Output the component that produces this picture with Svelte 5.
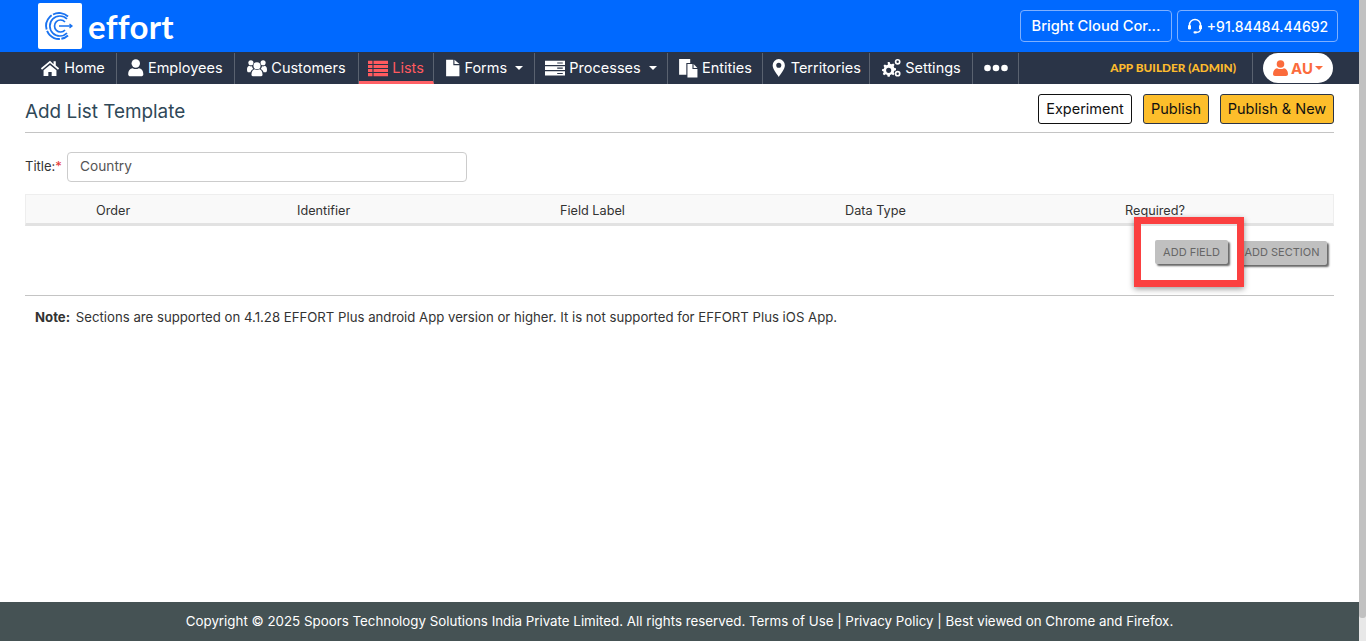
<script>
  const navItems = [
    { label: 'Home', icon: 'home', width: 88 },
    { label: 'Employees', icon: 'user', width: 118 },
    { label: 'Customers', icon: 'users', width: 124 },
    { label: 'Lists', icon: 'list', width: 75, active: true },
    { label: 'Forms', icon: 'file', width: 101, caret: true },
    { label: 'Processes', icon: 'server', width: 133, caret: true },
    { label: 'Entities', icon: 'copy', width: 95 },
    { label: 'Territories', icon: 'pin', width: 107 },
    { label: 'Settings', icon: 'cogs', width: 103 },
    { label: '', icon: 'dots', width: 46 }
  ];
  const columns = [
    { label: 'Order', width: 201 },
    { label: 'Identifier', width: 263 },
    { label: 'Field Label', width: 285 },
    { label: 'Data Type', width: 280 },
    { label: 'Required?', width: 209 }
  ];
  // the narrow glyphs get a cropped box so the label sits closer
  const narrow = ['user', 'file', 'pin'];
</script>

<div class="page">
  <div class="main">
    <header class="topbar">
      <div class="logo">
        <div class="logo-box">
          <svg width="44" height="46" viewBox="0 0 44 46" fill="none" stroke="#1a73f0">
            <path d="M30 13.500a13 13 0 1 0 0 19" stroke-width="1.900" stroke-dasharray="16 1.500" />
            <path d="M29 16a10 10 0 1 0 0 14" stroke-width="1.700" />
            <path d="M27 19a6 6 0 1 0 0 8" stroke-width="1.700" />
            <path d="M21 23h13M31.500 21l2.500 2-2.500 2" stroke-width="1.300" />
          </svg>
        </div>
        <span class="logo-text">effort</span>
      </div>
      <div class="top-actions">
        <div class="top-btn company">Bright Cloud Cor...</div>
        <div class="top-btn phone">
          <svg width="16" height="16" viewBox="0 0 16 16" fill="none" stroke="#fff" stroke-width="1.400">
            <path d="M2.500 9V7a5.500 5.500 0 0 1 11 0v2" />
            <rect x="1" y="7" width="3" height="4.500" rx="1.200" fill="#fff" stroke="none" />
            <rect x="12" y="7" width="3" height="4.500" rx="1.200" fill="#fff" stroke="none" />
            <path d="M13.500 11c0 2.200-1.500 3.300-4 3.300" stroke-width="1.200" />
            <rect x="6.500" y="13.200" width="3.500" height="2.200" rx="1" fill="#fff" stroke="none" />
          </svg>
          +91.84484.44692
        </div>
      </div>
    </header>

    <nav class="navbar">
      <div class="nav-items">
        {#each navItems as item}
          <div class="nav-item" class:active={item.active} style="width: {item.width}px">
            {#if item.icon === 'dots'}
              <svg class="nav-icon" width="24" height="18" viewBox="0 0 24 18" fill="currentColor">
                <circle cx="3.500" cy="9" r="3.300" />
                <circle cx="12" cy="9" r="3.300" />
                <circle cx="20.500" cy="9" r="3.300" />
              </svg>
            {:else}
              <svg
                class="nav-icon"
                width={narrow.includes(item.icon) ? 15.560 : 20}
                height="20"
                viewBox={narrow.includes(item.icon) ? '2 0 14 18' : '0 0 18 18'}
                fill="currentColor"
              >
                {#if item.icon === 'home'}
                  <path d="M9 2.500.8 9.300l1 1.200L9 4.600l7.200 5.900 1-1.200-3-2.500V3h-2v2.600z" />
                  <path d="M3.200 11 9 6.200l5.800 4.800v5.200h-4.300v-3.700h-3v3.700H3.200z" />
                {:else if item.icon === 'user'}
                  <circle cx="9" cy="5" r="3.800" />
                  <path d="M2.200 14.800c0-3.600 1.800-5.400 4-5.600 1.700 1 3.900 1 5.600 0 2.200.2 4 2 4 5.600 0 1-.9 1.700-2 1.700H4.200c-1.100 0-2-.7-2-1.700z" />
                {:else if item.icon === 'users'}
                  <circle cx="9" cy="7" r="3.200" />
                  <circle cx="3.500" cy="4.300" r="2.300" />
                  <circle cx="14.500" cy="4.300" r="2.300" />
                  <path d="M4 15c0-3 1.500-4.500 3-4.800 1.200.7 2.800.7 4 0 1.500.3 3 1.800 3 4.800 0 1-1 1.500-2 1.500H6c-1 0-2-.5-2-1.500z" />
                  <path d="M0 10.500c0-2 .8-3.300 2-3.500.8.500 1.600.7 2.500.4.100 1 .6 1.800 1.200 2.400-1.200.6-2.200 1.500-2.600 3H1.500C.5 12.800 0 12 0 10.500zM18 10.500c0-2-.8-3.300-2-3.500-.8.500-1.600.7-2.500.4-.1 1-.6 1.800-1.200 2.400 1.200.6 2.200 1.500 2.600 3h1.600c1 0 1.500-.8 1.500-2.300z" />
                {:else if item.icon === 'list'}
                  <path d="M0 2.500h4v2.800H0zM5 2.500h13v2.800H5zM0 6.200h4V9H0zM5 6.200h13V9H5zM0 9.900h4v2.800H0zM5 9.900h13v2.800H5zM0 13.600h4v2.800H0zM5 13.600h13v2.800H5z" />
                {:else if item.icon === 'file'}
                  <path d="M3 1.500h6.500v5h5.500v10H3z" />
                  <path d="M10.500 1.500l4.500 4h-4.500z" />
                {:else if item.icon === 'server'}
                  <path d="M0 2.500h18v3.800H0zM0 7.500h18v3.200H0zM0 12h18v3.800H0z" />
                  <path d="M11 4h5v1h-5zM11 8.600h5v1h-5zM11 13.500h5v1h-5z" fill="#2a3447" />
                {:else if item.icon === 'copy'}
                  <path d="M1 1h10v3.500H7.500V15H1z" />
                  <path d="M8.500 5.500h4.500v4.500h4.500V17.500h-9z" />
                  <path d="M14 5.500l3.500 3.500H14z" />
                {:else if item.icon === 'pin'}
                  <path fill-rule="evenodd" d="M9 1a5.500 5.500 0 0 0-5.500 5.500C3.500 10 7 14 9 17c2-3 5.500-7 5.500-10.500A5.500 5.500 0 0 0 9 1zm0 3.200a2.300 2.300 0 1 1 0 4.600 2.300 2.300 0 0 1 0-4.600z" />
                {:else}
                  <path fill-rule="evenodd" d="M6 3.500h1.800l.4 1.600 1.400.6 1.400-.8 1.200 1.200-.8 1.400.6 1.400 1.500.4v1.800l-1.500.4-.6 1.400.8 1.400-1.200 1.200-1.400-.8-1.400.6-.4 1.500H6l-.4-1.500-1.400-.6-1.400.8-1.200-1.200.8-1.400-.6-1.400L.9 12V10.200l1.500-.4.6-1.400-.8-1.400 1.200-1.200 1.400.8 1.400-.6zM6.900 8.800a2.300 2.300 0 1 0 0 4.600 2.300 2.300 0 0 0 0-4.600z" />
                  <path fill-rule="evenodd" d="M15 .8a2.600 2.600 0 1 1 0 5.200 2.600 2.600 0 0 1 0-5.200zm0 1.500a1.100 1.100 0 1 0 0 2.200 1.100 1.100 0 0 0 0-2.200z" />
                  <path fill-rule="evenodd" d="M15 11.500a2.600 2.600 0 1 1 0 5.200 2.600 2.600 0 0 1 0-5.200zm0 1.500a1.100 1.100 0 1 0 0 2.200 1.100 1.100 0 0 0 0-2.200z" />
                {/if}
              </svg>
            {/if}
            {#if item.label}<span>{item.label}</span>{/if}
            {#if item.caret}<i class="caret"></i>{/if}
          </div>
        {/each}
      </div>
      <div class="nav-right">
        <span class="role">APP BUILDER (ADMIN)</span>
        <div class="user-pill">
          <svg width="15" height="16" viewBox="0 0 15 16" fill="#fb6b3c">
            <circle cx="7.500" cy="4" r="3.800" />
            <path d="M0 14c0-3.500 2-5.500 4-5.800 2 1.200 5 1.200 7 0 2 .3 4 2.300 4 5.800 0 1-.8 2-2 2H2c-1.200 0-2-1-2-2z" />
          </svg>
          <span>AU</span>
          <i class="caret small"></i>
        </div>
      </div>
    </nav>

    <main class="content">
      <div class="page-head">
        <h1>Add List Template</h1>
        <div class="head-actions">
          <button class="btn outline">Experiment</button>
          <button class="btn yellow">Publish</button>
          <button class="btn yellow">Publish &amp; New</button>
        </div>
      </div>

      <div class="title-row">
        <label for="title">Title:<span class="req">*</span></label>
        <input id="title" value="Country" />
      </div>

      <div class="table-head">
        {#each columns as col}
          <div style="width: {col.width}px">{col.label}</div>
        {/each}
      </div>

      <div class="add-row">
        <div class="highlight">
          <button class="add-btn field">ADD FIELD</button>
        </div>
        <button class="add-btn section">ADD SECTION</button>
      </div>

      <p class="note"><b>Note:</b> Sections are supported on 4.1.28 EFFORT Plus android App version or higher. It is not supported for EFFORT Plus iOS App.</p>
    </main>

    <footer class="footer">
      Copyright © 2025 Spoors Technology Solutions India Private Limited. All rights reserved. Terms of Use | Privacy Policy | Best viewed on Chrome and Firefox.
    </footer>
  </div>
  <div class="scrollbar"><div class="thumb"></div></div>
</div>

<style>
  :global(body) { margin: 0; background: #fff; }
  .page { display: flex; height: 641px; overflow: hidden; font-family: Inter, "Open Sans", sans-serif; color: #222; }
  .main { flex: 1; min-width: 0; display: flex; flex-direction: column; }
  .scrollbar { width: 7px; background: #e8e8e8; }
  .thumb { height: 618px; background: #c1c1c1; border-radius: 0 0 3px 3px; }

  .topbar { height: 52px; flex: none; background: #0069ff; display: flex; justify-content: space-between; align-items: center; padding: 0 21px 0 38px; box-sizing: border-box; }
  .logo { display: flex; align-items: center; gap: 6px; }
  .logo-box { width: 44px; height: 46px; background: #fff; border-radius: 2px; }
  .logo-box svg { display: block; }
  .logo-text { font-family: Lato, sans-serif; font-size: 33px; font-weight: 700; color: #fff; letter-spacing: .3px; line-height: 46px; }
  .top-actions { display: flex; gap: 5px; }
  .top-btn { height: 32px; box-sizing: border-box; border: 1px solid #7fb0ff; border-radius: 4px; color: #fff; font-size: 14px; font-weight: 500; display: flex; align-items: center; justify-content: center; white-space: nowrap; }
  .company { width: 152px; font-size: 14.700px; }
  .phone { width: 161px; gap: 4px; }

  .navbar { height: 32px; flex: none; background: #2a3447; display: flex; justify-content: space-between; align-items: stretch; padding-right: 26px; padding-left: 29px; box-sizing: border-box; }
  .nav-items { display: flex; align-items: stretch; }
  .nav-item { box-sizing: border-box; height: 31px; margin-top: 1px; padding-bottom: 2px; display: flex; align-items: center; justify-content: center; gap: 4px; color: #fff; font-size: 14.500px; border-right: 1px solid #5a6270; white-space: nowrap; }
  .nav-item.active { color: #ff5a5f; border-bottom: 3px solid #ff6166; padding-top: 1px; padding-bottom: 0; }
  .nav-icon { flex: none; }
  .caret { width: 0; height: 0; border-left: 4px solid transparent; border-right: 4px solid transparent; border-top: 4px solid #fff; margin-left: 4px; }
  .nav-right { display: flex; align-items: center; }
  .role { font-family: Lato, sans-serif; font-size: 11.800px; font-weight: 900; color: #fdbb2d; padding-right: 16px; margin-right: 10px; border-right: 1px solid #5a6270; line-height: 30px; }
  .user-pill { width: 70px; height: 30px; background: #fff; border-radius: 15px; color: #fb6b3c; display: flex; align-items: center; justify-content: center; gap: 3px; font-size: 15px; font-weight: 700; }
  .caret.small { border-top-color: #fb6b3c; margin-left: -1px; }

  .content { flex: 1; padding: 0 25px 0 25px; display: flex; flex-direction: column; min-height: 0; }
  .page-head { height: 49px; flex: none; box-sizing: border-box; border-bottom: 1px solid #c4c4c4; display: flex; justify-content: space-between; align-items: flex-start; padding-top: 10px; }
  h1 { margin: 5px 0 0; font-size: 18.900px; font-weight: 400; color: #2f4858; padding-top: 1px; }
  .head-actions { display: flex; gap: 11px; }
  .btn { height: 30px; box-sizing: border-box; border: 1px solid #2a3447; border-radius: 3px; font: inherit; font-size: 14.500px; color: #111; padding: 0 0 2px; }
  .btn.outline { width: 94px; background: #fff; border-color: #111; }
  .btn.yellow { background: #fdbe2b; width: 66px; }
  .btn.yellow:last-child { width: 114px; }

  .title-row { display: flex; align-items: center; margin-top: 19px; height: 30px; }
  label { font-size: 13px; width: 42px; color: #333; padding-bottom: 3px; }
  .req { color: #e53935; }
  input { width: 400px; height: 30px; box-sizing: border-box; border: 1px solid #ccc; border-radius: 4px; padding: 0 12px 2px; font: inherit; font-size: 13.700px; color: #555; }

  .table-head { margin-top: 12px; height: 32px; flex: none; box-sizing: border-box; background: #f9f9f9; border: 1px solid #eee; border-bottom: 3px solid #e2e2e2; display: flex; align-items: center; font-size: 12.700px; color: #333; padding-left: 70px; padding-top: 2px; }
  .table-head > div { flex: none; }

  .add-row { height: 70px; flex: none; box-sizing: border-box; border-bottom: 1px solid #c4c4c4; display: flex; justify-content: flex-end; align-items: flex-start; padding: 15px 7px 0 0; position: relative; }
  .add-btn { height: 24px; box-sizing: border-box; border: none; border-radius: 2px; background: #c0c0c0; color: #666; font: inherit; font-size: 11px; padding: 0 0 2px; box-shadow: 2px 2px 2px rgba(0, 0, 0, .6); }
  .add-btn.field { width: 73px; padding-bottom: 0; }
  .add-btn.section { width: 90px; }
  .highlight { position: absolute; right: 90px; top: -9px; width: 110px; height: 70px; box-sizing: border-box; border: 7px solid #fb4040; box-shadow: 0 2px 6px rgba(0, 0, 0, .4); z-index: 1; display: flex; align-items: flex-start; padding: 16px 0 0 14px; }

  .note { margin: 13px 0 0 10px; font-size: 13.200px; color: #333; }
  .note b { margin-right: 2px; }

  .footer { height: 39px; flex: none; background: #455254; color: #fff; font-size: 13.340px; display: flex; align-items: center; justify-content: center; padding-bottom: 2px; box-sizing: border-box; }
</style>
